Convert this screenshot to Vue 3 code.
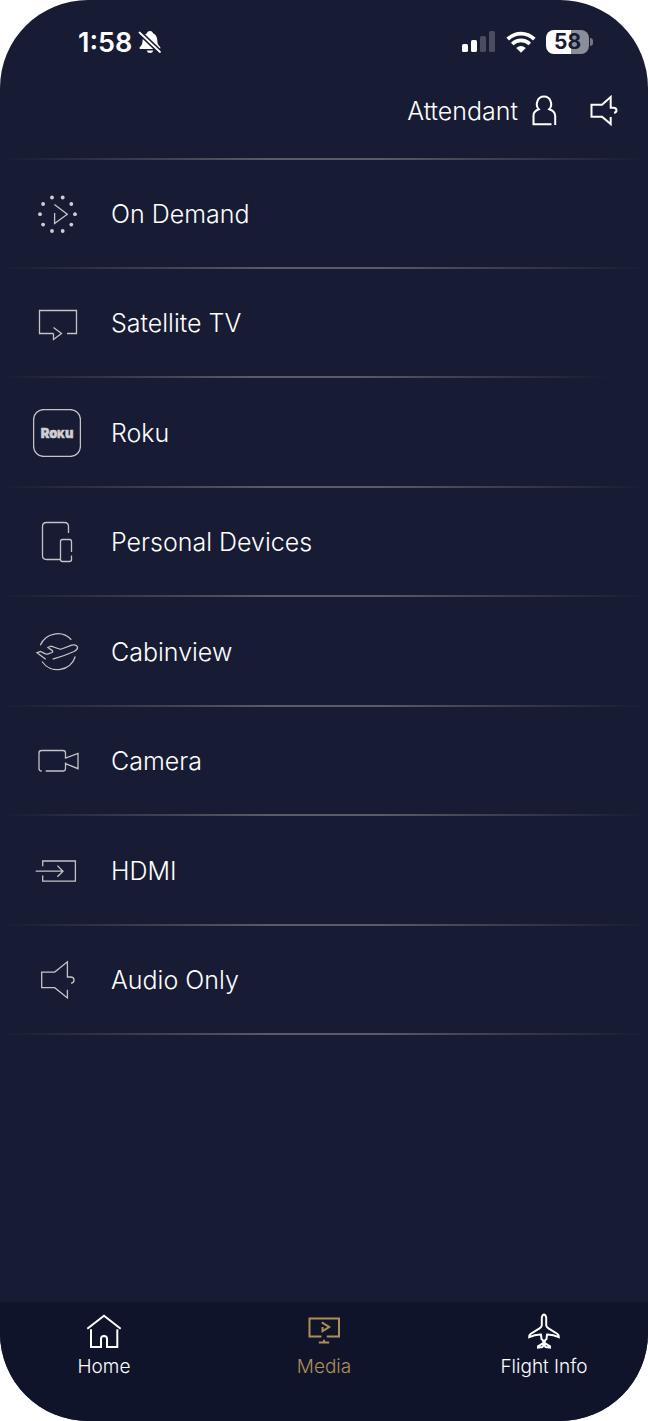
<script setup>
import { ref } from 'vue'

const active = ref('Media')

const sources = [
    { name: 'On Demand', icon: 'demand' },
    { name: 'Satellite TV', path: 'M20.5 34.5H6.5V11.5H43.5V34.5H34M20.5 28.5L28.5 34.5L20.5 40.5V34.5' },
    { name: 'Roku', icon: 'roku' },
    { name: 'Personal Devices', path: 'M35.5 15V8.5Q35.5 4.5 31.5 4.5H13.5Q9.5 4.5 9.5 8.5V37.5Q9.5 41.5 13.5 41.5H27.5M38.5 34V23.5Q38.5 21.5 36.5 21.5H29.5Q27.5 21.5 27.5 23.5V41.5Q27.5 43.5 29.5 43.5H36.5Q38.5 43.5 38.5 41.5V37.5' },
    { name: 'Cabinview', path: 'M7.3 17.2A18.7 18.7 0 0 1 38.3 11.8M42.3 28.5A18.7 18.7 0 0 1 9 33.5M19.7 31.2Q30 28.5 41 23.5Q44.9 21.4 44.5 19Q43.5 16 38.7 17.2L28.5 21Q27.5 21.4 26.3 21L18.2 18.2L15 19.5L19.3 22.6Q20.3 23.7 19 24.5L14.5 26.1Q13.4 26.4 12.3 25.8L7.5 23.5L4 24.8L12.7 31.2' },
    { name: 'Camera', path: 'M8.7 34Q6 34 6 31.5V16Q6 13.5 8.5 13.5H30Q32.5 13.5 32.5 16V21L45 16.5V31.7L32.5 26.7M32.5 25.5V31.5Q32.5 34 30 34H12.7' },
    { name: 'HDMI', path: 'M9.7 19.2V14H42.4V34.2H9.7V28.5M2.7 24.2H30M24.4 18.6L30 24.2L24.4 29.7' },
    { name: 'Audio Only', path: 'M34.4 33.7V42L21.7 31.7H8.7V16.1H21.7L34.4 5.8V21H37.5Q41 21 41 24.1Q41 27.2 38 27.2' }
]

// centres of the dots around the play mark
const dots = [
    [19, 7.5], [29.7, 7.5], [10.1, 14], [38.3, 14], [7, 24.2],
    [42, 24.2], [10.1, 34.6], [38.3, 34.6], [19, 41], [29.7, 41]
]

const tabs = [
    { name: 'Home', path: 'M1.3 15.7L18 2.7L34.7 15.7M5 16.3V34H15V26Q15 23 18 23Q21 23 21 26V34H31.3V16.3' },
    { name: 'Media', path: 'M15.5 23.5H3.5V5.5H33V23.5H20.8M16.5 14V18.2L23.2 14L15.8 9.3M18 26.7V29.3M12.8 29.5H23.2' },
    { name: 'Flight Info', path: 'M18 1.5Q16 2 15.8 5V12.3Q15.5 14 13.5 15.4L4.5 21Q3 22.3 3.2 24.2Q9 21.4 15 21.6L15.5 26L17.2 27.6V30.2L12 33.4V34.6L16.4 34L18 31.6L19.6 34L24 34.6V33.4L18.8 30.2V27.6L20.5 26L21 21.6Q27 21.4 32.8 24.2Q33 22.3 31.5 21L22.5 15.4Q20.5 14 20.2 12.3V5Q20 2 18 1.5Z' }
]
</script>

<template>
    <div class="phone">
        <div class="status">
            <div class="status-left">
                <span class="time">1:58</span>
                <svg class="bell" width="24" height="24" viewBox="0 0 24 24">
                    <path fill="#fff" d="M12 1C14 1 14.8 2.2 15 3.2C18.2 4.5 19.2 7.2 19.3 10.5C19.4 14 20.2 15.2 21.8 16.6Q23 18 22 19H2Q1 18.5 1.7 17.2C3.6 15.4 4.5 14 4.6 10.5C4.8 7 6.2 4.3 9 3.2C9.3 2 10 1 12 1ZM8.7 20.5H15.3Q14.6 23 12 23Q9.4 23 8.7 20.5Z" />
                    <path stroke="#171b33" stroke-width="5" d="M0 1L23 23" />
                    <path stroke="#fff" stroke-width="1.8" stroke-linecap="round" d="M1.5 2.5L22 22" />
                </svg>
            </div>
            <div class="status-right">
                <svg width="34" height="22" viewBox="0 0 34 22" fill="#fff">
                    <rect x="0" y="13" width="6" height="8" rx="1.6" />
                    <rect x="9" y="9" width="6" height="12" rx="1.6" />
                    <rect x="18" y="5" width="6" height="16" rx="1.6" opacity=".22" />
                    <rect x="27" y="0" width="6" height="21" rx="1.6" opacity=".22" />
                </svg>
                <svg width="30" height="22" viewBox="0 0 30 22" fill="none" stroke="#fff" stroke-width="3.7">
                    <path d="M1.7 8.2Q7.5 2.6 15 2.6T28.3 8.2" />
                    <path d="M6.2 13Q10 9.4 15 9.4T23.8 13" />
                    <path fill="#fff" stroke="none" d="M10.2 17Q15 12.8 19.8 17L15 21.7Z" />
                </svg>
                <div class="battery-wrap">
                    <span class="battery">58</span>
                    <span class="battery-tip"></span>
                </div>
            </div>
        </div>

        <header class="header">
            <button type="button" class="attendant">
                Attendant
                <svg width="32" height="32" viewBox="0 0 32 32" class="line">
                    <path d="M23.5 29.2H5.5V20.5Q5.5 16.3 10.8 14.3C7 10.2 9 1.5 16 1.5S25 10.2 21.2 14.3Q27.2 16.3 27.2 21V30" />
                </svg>
            </button>
            <button type="button" class="volume" aria-label="Volume">
                <svg width="32" height="32" viewBox="0 0 32 32" class="line">
                    <path d="M22.7 22V29L14 21.8H3.5V9.8H14L22.7 2V12.7H25.5Q28.5 12.7 28.5 15.3Q28.5 17.7 26 17.7" />
                </svg>
            </button>
        </header>

        <ul class="sources">
            <li v-for="s in sources" :key="s.name">
                <button type="button">
                    <svg width="48" height="48" viewBox="0 0 48 48" class="source-icon">
                        <g v-if="s.icon === 'demand'">
                            <circle v-for="(d, i) in dots" :key="i" :cx="d[0]" :cy="d[1]" r="1.9" fill="#cfcfd1" stroke="none" />
                            <path d="M21.6 23V33.5L34.3 24.2L21.4 14.6" />
                        </g>
                        <g v-else-if="s.icon === 'roku'">
                            <rect x=".6" y=".6" width="46.8" height="46.8" rx="10" />
                            <text x="24" y="29" text-anchor="middle" class="roku">Ro<tspan class="roku-k">K</tspan>u</text>
                        </g>
                        <path v-else :d="s.path" />
                    </svg>
                    <span>{{ s.name }}</span>
                </button>
            </li>
        </ul>

        <nav class="tabs">
            <button
                v-for="t in tabs"
                :key="t.name"
                type="button"
                :class="{ active: active === t.name }"
                @click="active = t.name"
            >
                <svg width="36" height="36" viewBox="0 0 36 36" class="line">
                    <path :d="t.path" />
                </svg>
                <span>{{ t.name }}</span>
            </button>
        </nav>
    </div>
</template>

<style>
body {
    margin: 0;
    background: #fff;
}
</style>

<style scoped>
.phone {
    --rule: linear-gradient(to right, transparent, #5b5c69 42%, #5b5c69 58%, transparent);
    display: flex;
    flex-direction: column;
    box-sizing: border-box;
    min-height: 100vh;
    border-radius: 88px;
    overflow: hidden;
    background: #171b33;
    color: #fff;
    font-family: Inter, "Liberation Sans", sans-serif;
    font-weight: 300;
}
button {
    margin: 0;
    padding: 0;
    border: 0;
    background: none;
    color: inherit;
    font: inherit;
    cursor: pointer;
}
svg {
    display: block;
    flex: none;
}
.line {
    fill: none;
    stroke: currentColor;
    stroke-width: 2;
}
.status {
    display: flex;
    justify-content: space-between;
    align-items: center;
    height: 84px;
    padding: 0 55px 0 78px;
}
.status-left,
.status-right {
    display: flex;
    align-items: center;
}
.status-left {
    gap: 6px;
}
.status-right {
    gap: 10px;
}
.time {
    font-size: 27px;
    font-weight: 600;
}
.battery-wrap {
    display: flex;
    align-items: center;
    gap: 1px;
}
.battery {
    width: 43px;
    height: 24px;
    border-radius: 8px;
    background: linear-gradient(to right, #fff 58%, #8b8d99 58%);
    color: #171b33;
    font-size: 21px;
    line-height: 24px;
    font-weight: 700;
    text-align: center;
}
.battery-tip {
    width: 3px;
    height: 8px;
    border-radius: 0 4px 4px 0;
    background: #747685;
}
.header {
    display: flex;
    justify-content: flex-end;
    align-items: center;
    gap: 28px;
    height: 54px;
    padding: 0 28px 20px;
}
.attendant {
    display: flex;
    align-items: center;
    gap: 10px;
    font-size: 25px;
}
.sources {
    display: grid;
    grid-auto-rows: 1fr;
    min-height: 876px;
    margin: 0;
    padding: 1px 0 0;
    background: var(--rule) top / 100% 2px no-repeat;
    list-style: none;
}
.sources li {
    display: flex;
    background: var(--rule) bottom left / 100% 2px no-repeat;
}
.sources li:nth-child(2) {
    background-size: 94% 2px;
}
.sources button {
    display: flex;
    flex: 1;
    align-items: center;
    gap: 30px;
    padding: 0 33px;
    font-size: 25px;
    text-align: left;
}
.source-icon {
    fill: none;
    stroke: #c4c4c8;
    stroke-width: 1.3;
}
.roku {
    fill: #cfcfd1;
    stroke: #cfcfd1;
    stroke-width: .5;
    font-size: 13px;
    font-weight: 900;
}
.roku-k {
    font-size: 10px;
}
.tabs {
    display: flex;
    justify-content: space-between;
    align-items: flex-start;
    box-sizing: border-box;
    min-height: 119px;
    margin-top: auto;
    padding: 11px 60px 0;
    background: #0f142b;
}
.tabs button {
    display: flex;
    flex-direction: column;
    align-items: center;
    gap: 6px;
    width: 88px;
    font-size: 19px;
    line-height: 24px;
    white-space: nowrap;
}
.tabs .active {
    color: #b08d57;
}
</style>
